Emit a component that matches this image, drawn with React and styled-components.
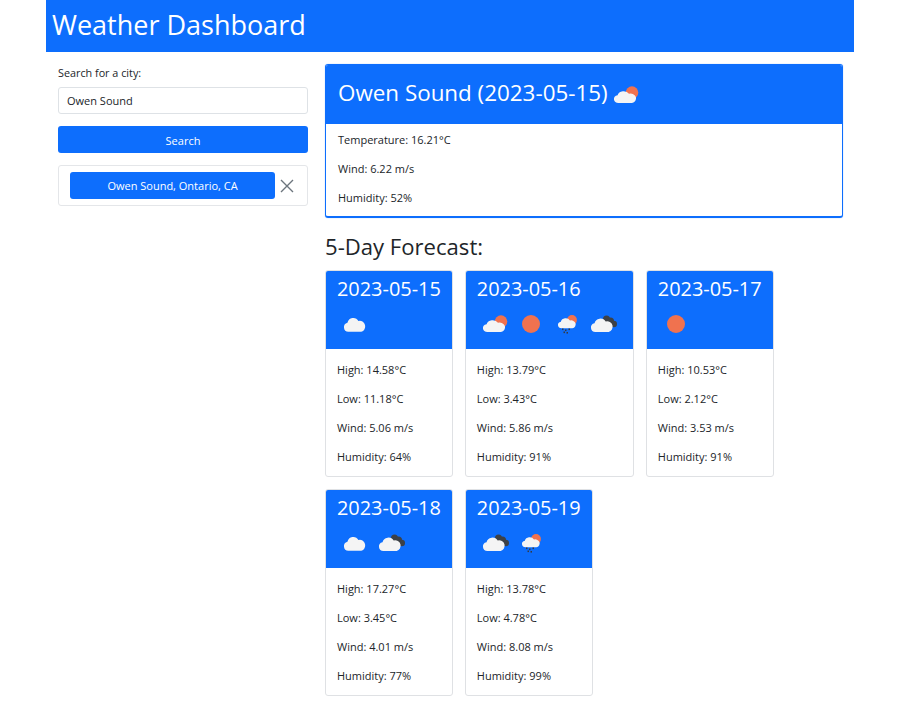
import React from 'react'
import styled, { createGlobalStyle } from 'styled-components'

const BLUE = '#0d6efd'

const GlobalStyle = createGlobalStyle`
  body {
    margin: 0;
    background: #fff;
    font-family: 'Open Sans', 'Noto Sans', sans-serif;
    color: #212529;
  }
`

const Page = styled.div`
  width: 808px;
  margin-left: 46px;
`

const Header = styled.header`
  height: 52px;
  background: ${BLUE};
  color: #fff;
  padding-left: 6px;
  display: flex;
  align-items: center;
`

const PageTitle = styled.h1`
  margin: 0 0 2px;
  font-size: 27px;
  font-weight: 400;
  line-height: 32px;
`

const Columns = styled.div`
  display: flex;
  gap: 17px;
  padding: 12px 11px 0 12px;
`

const Sidebar = styled.aside`
  width: 250px;
  flex: none;
  padding-top: 1px;
`

const Label = styled.label`
  display: block;
  font-size: 10.8px;
  line-height: 15px;
  margin-bottom: 7px;
`

const Input = styled.input`
  display: block;
  box-sizing: border-box;
  width: 100%;
  height: 27px;
  padding: 0 8px;
  border: 1px solid #dee2e6;
  border-radius: 3px;
  font: 11px 'Open Sans', sans-serif;
  color: #212529;
  outline: none;
`

const PrimaryButton = styled.button`
  display: block;
  box-sizing: border-box;
  width: ${props => props.width || '100%'};
  height: 27px;
  border: 0;
  border-radius: 3px;
  background: ${BLUE};
  color: #fff;
  font: 11px 'Open Sans', sans-serif;
  padding: 0;
`

const SearchButton = styled(PrimaryButton)`
  margin-top: 12px;
  padding-top: 2px;
`

const HistoryList = styled.div`
  box-sizing: border-box;
  height: 41px;
  margin-top: 12px;
  padding: 6px 11px;
  display: flex;
  align-items: center;
  gap: 5px;
  border: 1px solid #e4e6e9;
  border-radius: 3px;
`

const CloseIcon = styled.svg`
  width: 14px;
  height: 14px;
  flex: none;
`

const Main = styled.main`
  flex: 1;
  min-width: 0;
`

const CurrentCard = styled.section`
  border: 1px solid ${BLUE};
  border-bottom-width: 2px;
  border-radius: 3px;
  box-shadow: 0 0 1px rgba(13, 110, 253, 0.6);
  overflow: hidden;
`

const CurrentHead = styled.div`
  box-sizing: border-box;
  height: 59px;
  background: ${BLUE};
  color: #fff;
  padding: 0 12px 4px;
  display: flex;
  align-items: center;
`

const CurrentTitle = styled.h2`
  margin: 0;
  font-size: 22.4px;
  font-weight: 400;
  line-height: 28px;
  display: flex;
  align-items: center;
`

const CurrentIcon = styled.span`
  display: flex;
  margin-top: 4px;
`

const CurrentBody = styled.div`
  padding: 1px 12px 4px;
`

const Stat = styled.p`
  margin: 0;
  height: 29px;
  font-size: 11px;
  line-height: 29px;
`

const ForecastTitle = styled.h3`
  margin: 14px 0 10px;
  font-size: 22.1px;
  font-weight: 400;
  line-height: 28px;
`

const ForecastGrid = styled.div`
  display: flex;
  flex-wrap: wrap;
  gap: 12px;
`

const DayCard = styled.article`
  box-sizing: border-box;
  height: 207px;
  border: 1px solid #dfe1e4;
  border-radius: 3px;
  overflow: hidden;
`

const DayHead = styled.div`
  box-sizing: border-box;
  height: 79px;
  margin: -1px -1px 0;
  background: ${BLUE};
  color: #fff;
  padding: 6px 12px 0;
`

const DayDate = styled.h4`
  margin: 0;
  font-size: 19.9px;
  font-weight: 400;
  line-height: 26px;
  white-space: nowrap;
`

const IconRow = styled.div`
  display: flex;
  margin-top: 4px;
  padding-right: 1px;
`

const DayBody = styled.div`
  padding: 6px 12px 0 11px;
`

const IconSvg = styled.svg`
  width: 36px;
  height: 36px;
  flex: none;
`

const CLOUD = 'M4.6 15A4.6 4.6 0 0 1 3.6 5.9 6.2 6.2 0 0 1 15 4.2 5.6 5.6 0 0 1 18 15z'
const WHITE = '#f4f4f4'
const SUN = '#f0724f'
const DARK = '#3d4146'

function WeatherIcon({ kind }) {
  return (
    <IconSvg viewBox='0 0 36 36'>
      {kind === 'sun' && <circle cx='18' cy='18' r='9' fill={SUN} />}
      {kind === 'cloud' && <path d={CLOUD} fill={WHITE} transform='translate(7 10.8) scale(.96 1)' />}
      {kind === 'few' && (
        <g>
          <circle cx='24' cy='15.6' r='6.3' fill={SUN} />
          <path d={CLOUD} fill={WHITE} transform='translate(6 13.2) scale(1 .85)' />
        </g>
      )}
      {kind === 'rain' && (
        <g>
          <circle cx='23' cy='14' r='4.9' fill={SUN} />
          <path d={CLOUD} fill={WHITE} transform='translate(9 11.5) scale(.8 .72)' />
          <g fill='#343a46'>
            <rect x='13' y='22.5' width='1.5' height='1.6' />
            <rect x='16' y='23.5' width='1.5' height='1.6' />
            <rect x='19.5' y='22.5' width='1.5' height='1.6' />
            <rect x='14.5' y='25.5' width='1.5' height='1.6' />
            <rect x='17.5' y='26' width='1.5' height='1.6' />
          </g>
        </g>
      )}
      {kind === 'broken' && (
        <g>
          <circle cx='21.5' cy='13' r='3.5' fill={DARK} />
          <circle cx='25.5' cy='15' r='3.5' fill={DARK} />
          <circle cx='28.8' cy='18' r='3.2' fill={DARK} />
          <path d={CLOUD} fill={WHITE} transform='translate(6 11.5) scale(.98 .97)' />
        </g>
      )}
    </IconSvg>
  )
}

const days = [
  { date: '2023-05-15', icons: ['cloud'], high: '14.58', low: '11.18', wind: '5.06', humidity: 64 },
  { date: '2023-05-16', icons: ['few', 'sun', 'rain', 'broken'], high: '13.79', low: '3.43', wind: '5.86', humidity: 91 },
  { date: '2023-05-17', icons: ['sun'], high: '10.53', low: '2.12', wind: '3.53', humidity: 91 },
  { date: '2023-05-18', icons: ['cloud', 'broken'], high: '17.27', low: '3.45', wind: '4.01', humidity: 77 },
  { date: '2023-05-19', icons: ['broken', 'rain'], high: '13.78', low: '4.78', wind: '8.08', humidity: 99 }
]

export default function App() {
  return (
    <Page>
      <GlobalStyle />
      <Header>
        <PageTitle>Weather Dashboard</PageTitle>
      </Header>
      <Columns>
        <Sidebar>
          <Label htmlFor='city'>Search for a city:</Label>
          <Input id='city' defaultValue='Owen Sound' />
          <SearchButton>Search</SearchButton>
          <HistoryList>
            <PrimaryButton width='205px'>Owen Sound, Ontario, CA</PrimaryButton>
            <CloseIcon viewBox='0 0 14 14'>
              <path d='M1 1l12 12M13 1L1 13' stroke='#6c757d' strokeWidth='1.4' fill='none' />
            </CloseIcon>
          </HistoryList>
        </Sidebar>
        <Main>
          <CurrentCard>
            <CurrentHead>
              <CurrentTitle>
                Owen Sound (2023-05-15)
                <CurrentIcon><WeatherIcon kind='few' /></CurrentIcon>
              </CurrentTitle>
            </CurrentHead>
            <CurrentBody>
              <Stat>Temperature: 16.21°C</Stat>
              <Stat>Wind: 6.22 m/s</Stat>
              <Stat>Humidity: 52%</Stat>
            </CurrentBody>
          </CurrentCard>
          <ForecastTitle>5-Day Forecast:</ForecastTitle>
          <ForecastGrid>
            {days.map(day => (
              <DayCard key={day.date}>
                <DayHead>
                  <DayDate>{day.date}</DayDate>
                  <IconRow>
                    {day.icons.map((kind, i) => <WeatherIcon key={i} kind={kind} />)}
                  </IconRow>
                </DayHead>
                <DayBody>
                  <Stat>High: {day.high}°C</Stat>
                  <Stat>Low: {day.low}°C</Stat>
                  <Stat>Wind: {day.wind} m/s</Stat>
                  <Stat>Humidity: {day.humidity}%</Stat>
                </DayBody>
              </DayCard>
            ))}
          </ForecastGrid>
        </Main>
      </Columns>
    </Page>
  )
}
